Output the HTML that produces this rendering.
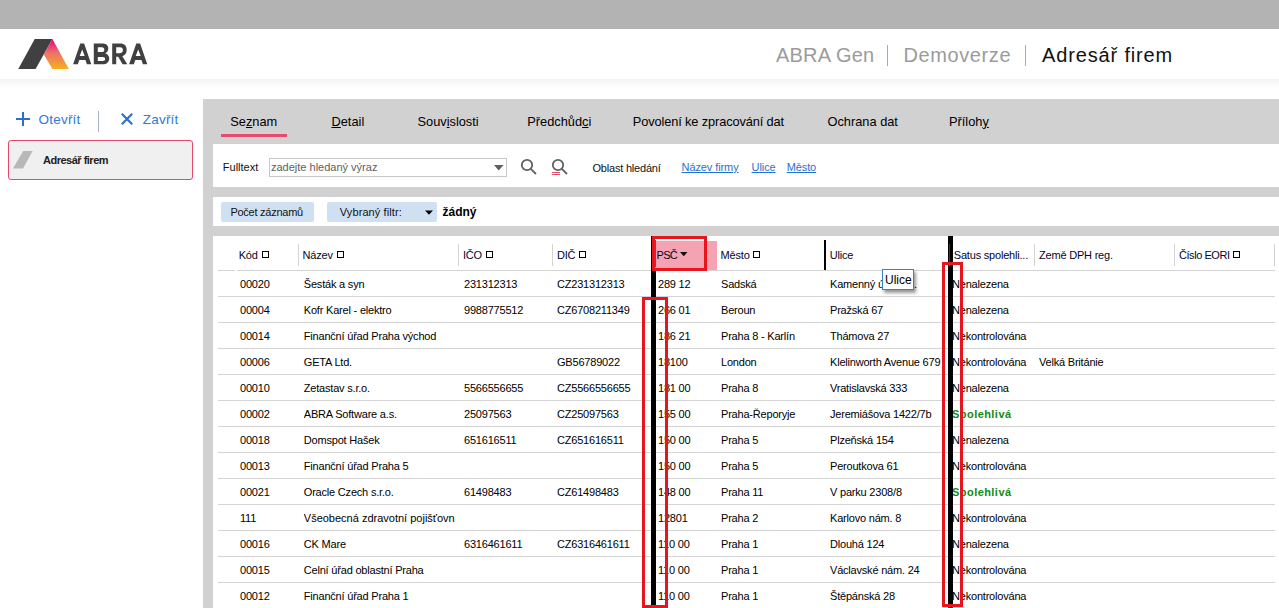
<!DOCTYPE html>
<html><head><meta charset="utf-8">
<style>
*{margin:0;padding:0;box-sizing:border-box}
html,body{width:1279px;height:608px;overflow:hidden;background:#fff;font-family:"Liberation Sans",sans-serif}
.a{position:absolute}
.t{position:absolute;line-height:1;white-space:nowrap}
.c{letter-spacing:-0.2px}
</style></head><body>
<div class="a" style="left:0;top:0;width:1279px;height:29px;background:#b3b3b3"></div>
<div class="a" style="left:0;top:79px;width:1279px;height:9px;background:linear-gradient(#f2f2f2,#fafafa 60%,#fff)"></div>
<svg class="a" style="left:0;top:0" width="160" height="80" viewBox="0 0 160 80">
<defs><linearGradient id="g" x1="0" y1="0" x2="0" y2="1">
<stop offset="0" stop-color="#e5007e"/><stop offset="0.45" stop-color="#ee6f6c"/><stop offset="1" stop-color="#f6b01e"/></linearGradient></defs>
<polygon points="34.7,39 52.4,39 35.6,69 18.3,69" fill="#404040"/>
<polygon points="52.4,39 68.8,69 52.4,69 43.8,54.4" fill="url(#g)"/>
</svg>
<svg class="a" style="left:0;top:0" width="160" height="80"><path fill-rule="evenodd" fill="#404040" d="M73.1 64.3L80.3 43.6H84.1L91.3 64.3H86.9L85.4 60H79.3L77.8 64.3Z M82.2 49.6L84.7 56.1H79.7Z M93.8 43.6H102.5C106.5 43.6 108.3 45.8 108.3 48.6C108.3 50.9 107 52.5 105.2 53.2C107.6 53.9 109.2 55.8 109.2 58.5C109.2 62 106.8 64.3 102.5 64.3H93.8Z M97.8 47.3H102C103.5 47.3 104.3 48.3 104.3 49.7C104.3 51.1 103.5 52 102 52H97.8Z M97.8 56.9H102.5C104.3 56.9 105.2 57.8 105.2 59C105.2 60.3 104.3 60.9 102.5 60.9H97.8Z M112.2 64.3V43.6H120.5C124.5 43.6 126.7 46 126.7 50C126.7 53 125 55.3 122.3 56.3L127.3 64.3H122.6L118.2 56.8H116.2V64.3Z M116.2 47.3H120C122 47.3 122.9 48.4 122.9 50.1C122.9 51.8 122 53.2 120 53.2H116.2Z M129.1 64.3L136.3 43.6H140.1L147.3 64.3H142.9L141.4 60H135.3L133.8 64.3Z M138.2 49.6L140.7 56.1H135.7Z"/></svg>
<div class="t " style="left:776px;top:44.87px;font-size:20px;color:#9b9b9b;letter-spacing:0.2px">ABRA Gen</div>
<div class="a" style="left:887px;top:45px;width:1px;height:21px;background:#a8a8b8"></div>
<div class="t " style="left:903.5px;top:44.87px;font-size:20px;color:#9b9b9b;letter-spacing:0.6px">Demoverze</div>
<div class="a" style="left:1025px;top:45px;width:1px;height:21px;background:#a8a8b8"></div>
<div class="t " style="left:1042px;top:44.87px;font-size:20px;color:#111;letter-spacing:0.85px">Adresář firem</div>
<svg class="a" style="left:16px;top:112px" width="14" height="14"><path d="M7 0V14M0 7H14" stroke="#2a6fd0" stroke-width="2"/></svg>
<div class="t " style="left:38.6px;top:112.87px;font-size:13.5px;color:#2e7bd8;letter-spacing:0.2px">Otevřít</div>
<div class="a" style="left:98px;top:111px;width:1px;height:21px;background:#a8b0c8"></div>
<svg class="a" style="left:121px;top:113px" width="12" height="12"><path d="M0.8 0.8L11.2 11.2M11.2 0.8L0.8 11.2" stroke="#2a6fd0" stroke-width="2.1"/></svg>
<div class="t " style="left:142.8px;top:112.87px;font-size:13.5px;color:#2e7bd8;letter-spacing:0.2px">Zavřít</div>
<div class="a" style="left:8px;top:140px;width:185px;height:40px;background:#f0f0f0;border:1px solid #e8476a;border-radius:3px"></div>
<svg class="a" style="left:12px;top:151px" width="22" height="18"><polygon points="11.2,0 20.6,0 11,17.6 0.9,17.6" fill="#b8b8b8"/></svg>
<div class="t " style="left:43px;top:155.19px;font-size:11px;color:#222;font-weight:bold;letter-spacing:-0.5px">Adresář firem</div>
<div class="a" style="left:203px;top:99px;width:1076px;height:509px;background:#d1d1d1"></div>
<div class="t " style="left:230.3px;top:115.66px;font-size:12.8px;color:#000;">Se<u>z</u>nam</div>
<div class="t " style="left:331.5px;top:115.66px;font-size:12.8px;color:#000;"><u>D</u>etail</div>
<div class="t " style="left:417.5px;top:115.66px;font-size:12.8px;color:#000;">Souv<u>i</u>slosti</div>
<div class="t " style="left:527.3px;top:115.66px;font-size:12.8px;color:#000;">Předchůd<u>c</u>i</div>
<div class="t " style="left:632.8px;top:115.66px;font-size:12.8px;color:#000;"><span style="letter-spacing:-0.12px">Povolení ke zpracování dat</span></div>
<div class="t " style="left:827.5px;top:115.66px;font-size:12.8px;color:#000;">Ochrana dat</div>
<div class="t " style="left:949px;top:115.66px;font-size:12.8px;color:#000;">Příloh<u>y</u></div>
<div class="a" style="left:221px;top:134px;width:66px;height:3px;background:#e84a6c"></div>
<div class="a" style="left:213px;top:144px;width:1066px;height:43px;background:#fff"></div>
<div class="t " style="left:222.8px;top:162.29px;font-size:11px;color:#111;">Fulltext</div>
<div class="a" style="left:269px;top:158px;width:238px;height:19px;border:1px solid #c8c8c8;background:#fff"></div>
<div class="t " style="left:271px;top:161.99px;font-size:11px;color:#606060;">zadejte hledaný výraz</div>
<svg class="a" style="left:494px;top:165px" width="10" height="6"><polygon points="0,0 9.5,0 4.75,5.5" fill="#606060"/></svg>
<svg class="a" style="left:518px;top:157px" width="22" height="22"><circle cx="9" cy="8" r="5.2" fill="none" stroke="#606060" stroke-width="1.8"/><path d="M12.8 11.8L18 17" stroke="#606060" stroke-width="1.8"/></svg>
<svg class="a" style="left:549px;top:157px" width="22" height="22"><circle cx="9" cy="8" r="5.2" fill="none" stroke="#606060" stroke-width="1.8"/><path d="M12.8 11.8L18 17" stroke="#606060" stroke-width="1.8"/><path d="M3 15.5H11M3 17.5H11" stroke="#e8506e" stroke-width="1"/></svg>
<div class="t " style="left:592.5px;top:162.69px;font-size:11px;color:#111;letter-spacing:-0.2px">Oblast hledání</div>
<div class="t " style="left:681.6px;top:161.89px;font-size:11px;color:#1f72d2;text-decoration:underline;text-underline-offset:1px;letter-spacing:-0.1px">Název firmy</div>
<div class="t " style="left:751.6px;top:161.89px;font-size:11px;color:#1f72d2;text-decoration:underline;text-underline-offset:1px;letter-spacing:-0.1px">Ulice</div>
<div class="t " style="left:786.7px;top:161.89px;font-size:11px;color:#1f72d2;text-decoration:underline;text-underline-offset:1px;letter-spacing:-0.1px">Město</div>
<div class="a" style="left:213px;top:197px;width:1066px;height:29px;background:#fff"></div>
<div class="a" style="left:221px;top:202px;width:93px;height:20px;background:#cfe0f3;border-radius:2px"></div>
<div class="t " style="left:230.4px;top:207.09px;font-size:11px;color:#111;letter-spacing:-0.25px">Počet záznamů</div>
<div class="a" style="left:327px;top:202px;width:110px;height:20px;background:#cfe0f3;border-radius:2px"></div>
<div class="t " style="left:339.8px;top:207.09px;font-size:11px;color:#111;letter-spacing:0.1px">Vybraný filtr:</div>
<svg class="a" style="left:424.5px;top:209.5px" width="9" height="6"><polygon points="0,0.5 8,0.5 4,4.8" fill="#000"/></svg>
<div class="t " style="left:442.5px;top:206.24px;font-size:12px;color:#000;font-weight:bold;letter-spacing:0px">žádný</div>
<div class="a" style="left:213px;top:236px;width:1066px;height:372px;background:#fff"></div>
<div class="a" style="left:298px;top:244px;width:1px;height:22px;background:#d4d4d4"></div>
<div class="a" style="left:458px;top:244px;width:1px;height:22px;background:#d4d4d4"></div>
<div class="a" style="left:552px;top:244px;width:1px;height:22px;background:#d4d4d4"></div>
<div class="a" style="left:1034px;top:244px;width:1px;height:22px;background:#d4d4d4"></div>
<div class="a" style="left:1174px;top:244px;width:1px;height:22px;background:#d4d4d4"></div>
<div class="a" style="left:1274px;top:244px;width:1px;height:22px;background:#d4d4d4"></div>
<div class="a" style="left:218px;top:270px;width:17px;height:1px;background:#d4d4d4"></div>
<div class="a" style="left:237px;top:270px;width:1038px;height:1px;background:#d4d4d4"></div>
<div class="a" style="left:218px;top:296px;width:1057px;height:1px;background:#d4d4d4"></div>
<div class="a" style="left:218px;top:322px;width:1057px;height:1px;background:#d4d4d4"></div>
<div class="a" style="left:218px;top:348px;width:1057px;height:1px;background:#d4d4d4"></div>
<div class="a" style="left:218px;top:374px;width:1057px;height:1px;background:#d4d4d4"></div>
<div class="a" style="left:218px;top:400px;width:1057px;height:1px;background:#d4d4d4"></div>
<div class="a" style="left:218px;top:426px;width:1057px;height:1px;background:#d4d4d4"></div>
<div class="a" style="left:218px;top:452px;width:1057px;height:1px;background:#d4d4d4"></div>
<div class="a" style="left:218px;top:478px;width:1057px;height:1px;background:#d4d4d4"></div>
<div class="a" style="left:218px;top:504px;width:1057px;height:1px;background:#d4d4d4"></div>
<div class="a" style="left:218px;top:530px;width:1057px;height:1px;background:#d4d4d4"></div>
<div class="a" style="left:218px;top:556px;width:1057px;height:1px;background:#d4d4d4"></div>
<div class="a" style="left:218px;top:582px;width:1057px;height:1px;background:#d4d4d4"></div>
<div class="a" style="left:655px;top:241px;width:62px;height:29px;background:#f5a2b2"></div>
<div class="t " style="left:238.7px;top:250.19px;font-size:11px;color:#05052a;letter-spacing:-0.2px">Kód <span style="display:inline-block;width:7px;height:7px;border:1px solid #000;vertical-align:1px;margin-left:1px"></span></div>
<div class="t " style="left:302.6px;top:250.19px;font-size:11px;color:#05052a;letter-spacing:-0.2px">Název <span style="display:inline-block;width:7px;height:7px;border:1px solid #000;vertical-align:1px;margin-left:1px"></span></div>
<div class="t " style="left:463px;top:250.19px;font-size:11px;color:#05052a;letter-spacing:-0.2px">IČO <span style="display:inline-block;width:7px;height:7px;border:1px solid #000;vertical-align:1px;margin-left:1px"></span></div>
<div class="t " style="left:557px;top:250.19px;font-size:11px;color:#05052a;letter-spacing:-0.2px">DIČ <span style="display:inline-block;width:7px;height:7px;border:1px solid #000;vertical-align:1px;margin-left:1px"></span></div>
<div class="t " style="left:720.6px;top:250.19px;font-size:11px;color:#05052a;letter-spacing:-0.2px">Město <span style="display:inline-block;width:7px;height:7px;border:1px solid #000;vertical-align:1px;margin-left:1px"></span></div>
<div class="t " style="left:829.7px;top:250.19px;font-size:11px;color:#05052a;letter-spacing:-0.2px">Ulice</div>
<div class="t " style="left:953.8px;top:250.19px;font-size:11px;color:#05052a;letter-spacing:-0.2px">Satus spolehli...</div>
<div class="t " style="left:1039px;top:250.19px;font-size:11px;color:#05052a;letter-spacing:-0.2px">Země DPH reg.</div>
<div class="t " style="left:1179px;top:250.19px;font-size:11px;color:#05052a;letter-spacing:-0.45px">Číslo EORI <span style="display:inline-block;width:7px;height:7px;border:1px solid #000;vertical-align:1px;margin-left:1px"></span></div>
<div class="t " style="left:656.6px;top:250.19px;font-size:11px;color:#05052a;letter-spacing:-0.8px">PSČ</div>
<div class="a" style="left:655px;top:240px;width:1px;height:27px;background:#2f6a6a"></div>
<svg class="a" style="left:680px;top:252px" width="8" height="5"><polygon points="0,0 7.5,0 3.75,4.3" fill="#111"/></svg>
<div class="t c" style="left:240px;top:273.69px;padding-top:5px;height:20px;font-size:11px;color:#000;width:58px;overflow:hidden">00020</div>
<div class="t c" style="left:303.8px;top:273.69px;padding-top:5px;height:20px;font-size:11px;color:#000;width:151px;overflow:hidden">Šesták a syn</div>
<div class="t c" style="left:464px;top:273.69px;padding-top:5px;height:20px;font-size:11px;color:#000;width:88px;overflow:hidden">231312313</div>
<div class="t c" style="left:557px;top:273.69px;padding-top:5px;height:20px;font-size:11px;color:#000;width:94px;overflow:hidden">CZ231312313</div>
<div class="t c" style="left:658px;top:273.69px;padding-top:5px;height:20px;font-size:11px;color:#000;width:59px;overflow:hidden">289 12</div>
<div class="t c" style="left:721px;top:273.69px;padding-top:5px;height:20px;font-size:11px;color:#000;width:103px;overflow:hidden">Sadská</div>
<div class="t c" style="left:830px;top:273.69px;padding-top:5px;height:20px;font-size:11px;color:#000;width:118px;overflow:hidden">Kamenný újezd</div>
<div class="t c" style="left:952px;top:273.69px;padding-top:5px;height:20px;font-size:11px;color:#000;width:82px;overflow:hidden">Nenalezena</div>
<div class="t c" style="left:240px;top:299.69px;padding-top:5px;height:20px;font-size:11px;color:#000;width:58px;overflow:hidden">00004</div>
<div class="t c" style="left:303.8px;top:299.69px;padding-top:5px;height:20px;font-size:11px;color:#000;width:151px;overflow:hidden">Kofr Karel - elektro</div>
<div class="t c" style="left:464px;top:299.69px;padding-top:5px;height:20px;font-size:11px;color:#000;width:88px;overflow:hidden">9988775512</div>
<div class="t c" style="left:557px;top:299.69px;padding-top:5px;height:20px;font-size:11px;color:#000;width:94px;overflow:hidden">CZ6708211349</div>
<div class="t c" style="left:658px;top:299.69px;padding-top:5px;height:20px;font-size:11px;color:#000;width:59px;overflow:hidden">266 01</div>
<div class="t c" style="left:721px;top:299.69px;padding-top:5px;height:20px;font-size:11px;color:#000;width:103px;overflow:hidden">Beroun</div>
<div class="t c" style="left:830px;top:299.69px;padding-top:5px;height:20px;font-size:11px;color:#000;width:118px;overflow:hidden">Pražská 67</div>
<div class="t c" style="left:952px;top:299.69px;padding-top:5px;height:20px;font-size:11px;color:#000;width:82px;overflow:hidden">Nenalezena</div>
<div class="t c" style="left:240px;top:325.69px;padding-top:5px;height:20px;font-size:11px;color:#000;width:58px;overflow:hidden">00014</div>
<div class="t c" style="left:303.8px;top:325.69px;padding-top:5px;height:20px;font-size:11px;color:#000;width:151px;overflow:hidden">Finanční úřad Praha východ</div>
<div class="t c" style="left:658px;top:325.69px;padding-top:5px;height:20px;font-size:11px;color:#000;width:59px;overflow:hidden">186 21</div>
<div class="t c" style="left:721px;top:325.69px;padding-top:5px;height:20px;font-size:11px;color:#000;width:103px;overflow:hidden">Praha 8 - Karlín</div>
<div class="t c" style="left:830px;top:325.69px;padding-top:5px;height:20px;font-size:11px;color:#000;width:118px;overflow:hidden">Thámova 27</div>
<div class="t c" style="left:952px;top:325.69px;padding-top:5px;height:20px;font-size:11px;color:#000;width:82px;overflow:hidden">Nekontrolována</div>
<div class="t c" style="left:240px;top:351.69px;padding-top:5px;height:20px;font-size:11px;color:#000;width:58px;overflow:hidden">00006</div>
<div class="t c" style="left:303.8px;top:351.69px;padding-top:5px;height:20px;font-size:11px;color:#000;width:151px;overflow:hidden">GETA Ltd.</div>
<div class="t c" style="left:557px;top:351.69px;padding-top:5px;height:20px;font-size:11px;color:#000;width:94px;overflow:hidden">GB56789022</div>
<div class="t c" style="left:658px;top:351.69px;padding-top:5px;height:20px;font-size:11px;color:#000;width:59px;overflow:hidden">18100</div>
<div class="t c" style="left:721px;top:351.69px;padding-top:5px;height:20px;font-size:11px;color:#000;width:103px;overflow:hidden">London</div>
<div class="t c" style="left:830px;top:351.69px;padding-top:5px;height:20px;font-size:11px;color:#000;width:118px;overflow:hidden">Klelinworth Avenue 679</div>
<div class="t c" style="left:952px;top:351.69px;padding-top:5px;height:20px;font-size:11px;color:#000;width:82px;overflow:hidden">Nekontrolována</div>
<div class="t c" style="left:1039px;top:351.69px;padding-top:5px;height:20px;font-size:11px;color:#000;width:135px;overflow:hidden">Velká Británie</div>
<div class="t c" style="left:240px;top:377.69px;padding-top:5px;height:20px;font-size:11px;color:#000;width:58px;overflow:hidden">00010</div>
<div class="t c" style="left:303.8px;top:377.69px;padding-top:5px;height:20px;font-size:11px;color:#000;width:151px;overflow:hidden">Zetastav s.r.o.</div>
<div class="t c" style="left:464px;top:377.69px;padding-top:5px;height:20px;font-size:11px;color:#000;width:88px;overflow:hidden">5566556655</div>
<div class="t c" style="left:557px;top:377.69px;padding-top:5px;height:20px;font-size:11px;color:#000;width:94px;overflow:hidden">CZ5566556655</div>
<div class="t c" style="left:658px;top:377.69px;padding-top:5px;height:20px;font-size:11px;color:#000;width:59px;overflow:hidden">181 00</div>
<div class="t c" style="left:721px;top:377.69px;padding-top:5px;height:20px;font-size:11px;color:#000;width:103px;overflow:hidden">Praha 8</div>
<div class="t c" style="left:830px;top:377.69px;padding-top:5px;height:20px;font-size:11px;color:#000;width:118px;overflow:hidden">Vratislavská 333</div>
<div class="t c" style="left:952px;top:377.69px;padding-top:5px;height:20px;font-size:11px;color:#000;width:82px;overflow:hidden">Nenalezena</div>
<div class="t c" style="left:240px;top:403.69px;padding-top:5px;height:20px;font-size:11px;color:#000;width:58px;overflow:hidden">00002</div>
<div class="t c" style="left:303.8px;top:403.69px;padding-top:5px;height:20px;font-size:11px;color:#000;width:151px;overflow:hidden">ABRA Software a.s.</div>
<div class="t c" style="left:464px;top:403.69px;padding-top:5px;height:20px;font-size:11px;color:#000;width:88px;overflow:hidden">25097563</div>
<div class="t c" style="left:557px;top:403.69px;padding-top:5px;height:20px;font-size:11px;color:#000;width:94px;overflow:hidden">CZ25097563</div>
<div class="t c" style="left:658px;top:403.69px;padding-top:5px;height:20px;font-size:11px;color:#000;width:59px;overflow:hidden">155 00</div>
<div class="t c" style="left:721px;top:403.69px;padding-top:5px;height:20px;font-size:11px;color:#000;width:103px;overflow:hidden">Praha-Řeporyje</div>
<div class="t c" style="left:830px;top:403.69px;padding-top:5px;height:20px;font-size:11px;color:#000;width:118px;overflow:hidden">Jeremiášova 1422/7b</div>
<div class="t c" style="left:952px;top:403.69px;padding-top:5px;height:20px;font-size:11px;color:#138a13;font-weight:bold;letter-spacing:0.45px;width:82px;overflow:hidden">Spolehlivá</div>
<div class="t c" style="left:240px;top:429.69px;padding-top:5px;height:20px;font-size:11px;color:#000;width:58px;overflow:hidden">00018</div>
<div class="t c" style="left:303.8px;top:429.69px;padding-top:5px;height:20px;font-size:11px;color:#000;width:151px;overflow:hidden">Domspot Hašek</div>
<div class="t c" style="left:464px;top:429.69px;padding-top:5px;height:20px;font-size:11px;color:#000;width:88px;overflow:hidden">651616511</div>
<div class="t c" style="left:557px;top:429.69px;padding-top:5px;height:20px;font-size:11px;color:#000;width:94px;overflow:hidden">CZ651616511</div>
<div class="t c" style="left:658px;top:429.69px;padding-top:5px;height:20px;font-size:11px;color:#000;width:59px;overflow:hidden">150 00</div>
<div class="t c" style="left:721px;top:429.69px;padding-top:5px;height:20px;font-size:11px;color:#000;width:103px;overflow:hidden">Praha 5</div>
<div class="t c" style="left:830px;top:429.69px;padding-top:5px;height:20px;font-size:11px;color:#000;width:118px;overflow:hidden">Plzeňská 154</div>
<div class="t c" style="left:952px;top:429.69px;padding-top:5px;height:20px;font-size:11px;color:#000;width:82px;overflow:hidden">Nenalezena</div>
<div class="t c" style="left:240px;top:455.69px;padding-top:5px;height:20px;font-size:11px;color:#000;width:58px;overflow:hidden">00013</div>
<div class="t c" style="left:303.8px;top:455.69px;padding-top:5px;height:20px;font-size:11px;color:#000;width:151px;overflow:hidden">Finanční úřad Praha 5</div>
<div class="t c" style="left:658px;top:455.69px;padding-top:5px;height:20px;font-size:11px;color:#000;width:59px;overflow:hidden">150 00</div>
<div class="t c" style="left:721px;top:455.69px;padding-top:5px;height:20px;font-size:11px;color:#000;width:103px;overflow:hidden">Praha 5</div>
<div class="t c" style="left:830px;top:455.69px;padding-top:5px;height:20px;font-size:11px;color:#000;width:118px;overflow:hidden">Peroutkova 61</div>
<div class="t c" style="left:952px;top:455.69px;padding-top:5px;height:20px;font-size:11px;color:#000;width:82px;overflow:hidden">Nekontrolována</div>
<div class="t c" style="left:240px;top:481.69px;padding-top:5px;height:20px;font-size:11px;color:#000;width:58px;overflow:hidden">00021</div>
<div class="t c" style="left:303.8px;top:481.69px;padding-top:5px;height:20px;font-size:11px;color:#000;width:151px;overflow:hidden">Oracle Czech s.r.o.</div>
<div class="t c" style="left:464px;top:481.69px;padding-top:5px;height:20px;font-size:11px;color:#000;width:88px;overflow:hidden">61498483</div>
<div class="t c" style="left:557px;top:481.69px;padding-top:5px;height:20px;font-size:11px;color:#000;width:94px;overflow:hidden">CZ61498483</div>
<div class="t c" style="left:658px;top:481.69px;padding-top:5px;height:20px;font-size:11px;color:#000;width:59px;overflow:hidden">148 00</div>
<div class="t c" style="left:721px;top:481.69px;padding-top:5px;height:20px;font-size:11px;color:#000;width:103px;overflow:hidden">Praha 11</div>
<div class="t c" style="left:830px;top:481.69px;padding-top:5px;height:20px;font-size:11px;color:#000;width:118px;overflow:hidden">V parku 2308/8</div>
<div class="t c" style="left:952px;top:481.69px;padding-top:5px;height:20px;font-size:11px;color:#138a13;font-weight:bold;letter-spacing:0.45px;width:82px;overflow:hidden">Spolehlivá</div>
<div class="t c" style="left:240px;top:507.69px;padding-top:5px;height:20px;font-size:11px;color:#000;width:58px;overflow:hidden">111</div>
<div class="t c" style="left:303.8px;top:507.69px;padding-top:5px;height:20px;font-size:11px;color:#000;width:151px;overflow:hidden"><span style="letter-spacing:0">Všeobecná zdravotní pojišťovna</span></div>
<div class="t c" style="left:658px;top:507.69px;padding-top:5px;height:20px;font-size:11px;color:#000;width:59px;overflow:hidden">12801</div>
<div class="t c" style="left:721px;top:507.69px;padding-top:5px;height:20px;font-size:11px;color:#000;width:103px;overflow:hidden">Praha 2</div>
<div class="t c" style="left:830px;top:507.69px;padding-top:5px;height:20px;font-size:11px;color:#000;width:118px;overflow:hidden">Karlovo nám. 8</div>
<div class="t c" style="left:952px;top:507.69px;padding-top:5px;height:20px;font-size:11px;color:#000;width:82px;overflow:hidden">Nekontrolována</div>
<div class="t c" style="left:240px;top:533.69px;padding-top:5px;height:20px;font-size:11px;color:#000;width:58px;overflow:hidden">00016</div>
<div class="t c" style="left:303.8px;top:533.69px;padding-top:5px;height:20px;font-size:11px;color:#000;width:151px;overflow:hidden">CK Mare</div>
<div class="t c" style="left:464px;top:533.69px;padding-top:5px;height:20px;font-size:11px;color:#000;width:88px;overflow:hidden">6316461611</div>
<div class="t c" style="left:557px;top:533.69px;padding-top:5px;height:20px;font-size:11px;color:#000;width:94px;overflow:hidden">CZ6316461611</div>
<div class="t c" style="left:658px;top:533.69px;padding-top:5px;height:20px;font-size:11px;color:#000;width:59px;overflow:hidden">110 00</div>
<div class="t c" style="left:721px;top:533.69px;padding-top:5px;height:20px;font-size:11px;color:#000;width:103px;overflow:hidden">Praha 1</div>
<div class="t c" style="left:830px;top:533.69px;padding-top:5px;height:20px;font-size:11px;color:#000;width:118px;overflow:hidden">Dlouhá 124</div>
<div class="t c" style="left:952px;top:533.69px;padding-top:5px;height:20px;font-size:11px;color:#000;width:82px;overflow:hidden">Nenalezena</div>
<div class="t c" style="left:240px;top:559.69px;padding-top:5px;height:20px;font-size:11px;color:#000;width:58px;overflow:hidden">00015</div>
<div class="t c" style="left:303.8px;top:559.69px;padding-top:5px;height:20px;font-size:11px;color:#000;width:151px;overflow:hidden">Celní úřad oblastní Praha</div>
<div class="t c" style="left:658px;top:559.69px;padding-top:5px;height:20px;font-size:11px;color:#000;width:59px;overflow:hidden">110 00</div>
<div class="t c" style="left:721px;top:559.69px;padding-top:5px;height:20px;font-size:11px;color:#000;width:103px;overflow:hidden">Praha 1</div>
<div class="t c" style="left:830px;top:559.69px;padding-top:5px;height:20px;font-size:11px;color:#000;width:118px;overflow:hidden">Václavské nám. 24</div>
<div class="t c" style="left:952px;top:559.69px;padding-top:5px;height:20px;font-size:11px;color:#000;width:82px;overflow:hidden">Nekontrolována</div>
<div class="t c" style="left:240px;top:585.69px;padding-top:5px;height:20px;font-size:11px;color:#000;width:58px;overflow:hidden">00012</div>
<div class="t c" style="left:303.8px;top:585.69px;padding-top:5px;height:20px;font-size:11px;color:#000;width:151px;overflow:hidden">Finanční úřad Praha 1</div>
<div class="t c" style="left:658px;top:585.69px;padding-top:5px;height:20px;font-size:11px;color:#000;width:59px;overflow:hidden">110 00</div>
<div class="t c" style="left:721px;top:585.69px;padding-top:5px;height:20px;font-size:11px;color:#000;width:103px;overflow:hidden">Praha 1</div>
<div class="t c" style="left:830px;top:585.69px;padding-top:5px;height:20px;font-size:11px;color:#000;width:118px;overflow:hidden">Štěpánská 28</div>
<div class="t c" style="left:952px;top:585.69px;padding-top:5px;height:20px;font-size:11px;color:#000;width:82px;overflow:hidden">Nekontrolována</div>
<div class="a" style="left:651px;top:236px;width:1px;height:34px;background:#000"></div>
<div class="a" style="left:651px;top:270px;width:5px;height:335px;background:#000"></div>
<div class="a" style="left:824px;top:240px;width:2px;height:30px;background:#000"></div>
<div class="a" style="left:948px;top:236px;width:5px;height:372px;background:#000"></div>
<div class="a" style="left:949px;top:244px;width:1px;height:22px;background:#3a3a3a"></div>
<div class="a" style="left:652px;top:236px;width:55px;height:35px;border:3px solid #e8141e"></div>
<div class="a" style="left:642px;top:297px;width:26px;height:320px;border:3px solid #e8141e;border-bottom:none"></div>
<div class="a" style="left:642px;top:605px;width:26px;height:3px;background:#e8141e"></div>
<div class="a" style="left:942px;top:262px;width:21px;height:345px;border:3px solid #e8141e"></div>
<div class="t " style="left:914px;top:278.69px;font-size:11px;color:#000;">.</div>
<div class="a" style="left:882px;top:269px;width:32px;height:21px;background:#fff;border:1px solid #2a88c8;box-shadow:2px 3px 3px rgba(0,0,0,0.4)"></div>
<div class="t " style="left:885px;top:273.84px;font-size:12px;color:#000;">Ulice</div>
</body></html>
